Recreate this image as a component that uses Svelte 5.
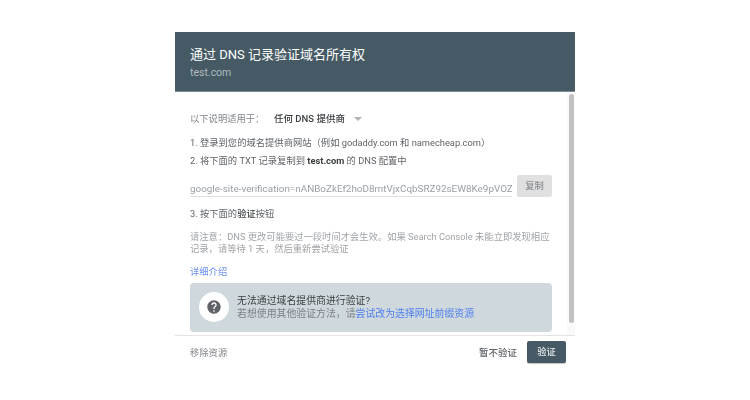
<script>
  const helpLink = '尝试改为选择网址前缀资源';
</script>

<div class="page">
  <div class="dialog">
    <header class="head">
      <div class="title">通过 DNS 记录验证域名所有权</div>
      <div class="sub">test.com</div>
    </header>
    <div class="body">
      <div class="content">
        <div class="applies">
          <span class="label">以下说明适用于：</span>
          <span class="provider">任何 DNS 提供商</span>
          <span class="caret"></span>
        </div>
        <p class="step first">1. 登录到您的域名提供商网站（例如 godaddy.com 和 namecheap.com）</p>
        <p class="step second">2. 将下面的 TXT 记录复制到 <b>test.com</b> 的 DNS 配置中</p>
        <div class="record">
          <div class="token">google-site-verification=nANBoZkEf2hoD8mtVjxCqbSRZ92sEW8Ke9pVOZ</div>
          <div class="copy">复制</div>
        </div>
        <p class="step third">3. 按下面的<b class="med">验证</b>按钮</p>
        <p class="note">请注意：DNS 更改可能要过一段时间才会生效。如果 Search Console 未能立即发现相应记录，请等待 1 天，然后重新尝试验证</p>
        <div class="more">详细介绍</div>
        <div class="help">
          <div class="circle">
            <svg width="16" height="16" viewBox="0 0 24 24"><path fill="#5f6368" d="M12 2C6.48 2 2 6.48 2 12s4.48 10 10 10 10-4.48 10-10S17.52 2 12 2zm1 17h-2v-2h2v2zm2.07-7.75l-.9.92C13.45 12.9 13 13.5 13 15h-2v-.5c0-1.1.45-2.1 1.17-2.83l1.24-1.26c.37-.36.59-.86.59-1.41 0-1.1-.9-2-2-2s-2 .9-2 2H8c0-2.21 1.79-4 4-4s4 1.79 4 4c0 .88-.36 1.68-.93 2.25z"/></svg>
          </div>
          <div class="help-text">
            <div class="help-title">无法通过域名提供商进行验证?</div>
            <div class="help-sub">若想使用其他验证方法，请<span class="link">{helpLink}</span></div>
          </div>
        </div>
      </div>
      <div class="track"><div class="thumb"></div></div>
    </div>
    <footer class="foot">
      <span class="remove">移除资源</span>
      <div class="actions">
        <span class="later">暂不验证</span>
        <span class="verify">验证</span>
      </div>
    </footer>
  </div>
</div>

<style>
  :global(body) { margin: 0; background: #fff; }
  .page {
    width: 750px;
    height: 400px;
    padding: 32px 0 0 175px;
    box-sizing: border-box;
    overflow: hidden;
    font-family: Roboto, "Noto Sans CJK SC", sans-serif;
    font-size: 9.3px;
    color: #5f6368;
  }
  .dialog { width: 400px; filter: blur(0.4px); }
  .head {
    height: 60px;
    box-sizing: border-box;
    background: #455a64;
    padding: 14px 15px 0;
    border-bottom: 1px solid #7b8d97;
  }
  .title { font-size: 13px; line-height: 18px; color: #fff; }
  .sub { font-size: 10.5px; line-height: 14px; margin-top: 2px; color: #aebbc1; }
  .body {
    display: flex;
    height: 243px;
    overflow: hidden;
    border-bottom: 1px solid #e4e4e4;
  }
  .content { width: 392px; padding: 0 0 0 15px; box-sizing: border-box; flex: none; }
  .applies { display: flex; align-items: center; height: 14px; margin-top: 19px; }
  .label { width: 84px; color: #80868b; }
  .provider { color: #3c4043; font-weight: 500; font-size: 9.5px; }
  .caret {
    margin-left: 9px;
    margin-top: 1px;
    border-left: 4px solid transparent;
    border-right: 4px solid transparent;
    border-top: 4px solid #b0b4b8;
  }
  p { margin: 0; }
  .step { line-height: 14px; color: #5f6368; }
  .first { margin-top: 11px; }
  .second { margin-top: 4px; }
  .step b { font-weight: 700; color: #3c4043; }
  .step b.med { font-weight: 500; }
  .record { display: flex; align-items: flex-start; margin-top: 7px; height: 23px; }
  .token {
    width: 322px;
    box-sizing: border-box;
    height: 22px;
    line-height: 27px;
    font-size: 9.9px;
    white-space: nowrap;
    overflow: hidden;
    color: #9aa0a6;
    border-bottom: 1px solid #e0e0e0;
  }
  .copy {
    width: 35px;
    height: 22px;
    margin-left: 5px;
    line-height: 22px;
    text-align: center;
    background: #e0e0e0;
    color: #8a8f93;
    border-radius: 2px;
    font-size: 9.3px;
    font-weight: 500;
  }
  .third { margin-top: 9px; }
  .note { margin-top: 10px; line-height: 12px; color: #a0a4a8; width: 360px; }
  .more { margin-top: 10px; line-height: 14px; color: #6c8ff5; }
  .help {
    display: flex;
    align-items: center;
    width: 362px;
    height: 49px;
    margin-top: 4px;
    background: #cfd8dc;
    border-radius: 4px;
    box-sizing: border-box;
    padding: 0 0 2px 9px;
  }
  .circle {
    width: 30px;
    height: 30px;
    border-radius: 50%;
    background: #fff;
    display: flex;
    align-items: center;
    justify-content: center;
    flex: none;
  }
  .help-text { margin-left: 8px; line-height: 13px; font-size: 9.9px; }
  .help-title { color: #3c4043; }
  .help-sub { color: #7b8287; }
  .link { color: #4f7ff0; }
  .track { width: 8px; flex: none; position: relative; background: #fafafa; }
  .thumb {
    width: 5px;
    height: 229px;
    margin: 2px 0 0 2px;
    background: #c1c1c1;
    border-radius: 3px;
  }
  .foot {
    display: flex;
    justify-content: space-between;
    align-items: center;
    height: 32px;
    padding: 0 9px 0 15px;
  }
  .remove { color: #80868b; }
  .actions { display: flex; align-items: center; }
  .later { color: #5f6368; font-weight: 500; font-size: 9.5px; }
  .verify {
    width: 39px;
    height: 22px;
    margin-left: 10px;
    line-height: 22px;
    text-align: center;
    background: #455a64;
    color: #e6eaec;
    border-radius: 2px;
    font-weight: 500;
    box-shadow: 0 1px 1px rgba(0,0,0,.25);
  }
</style>
